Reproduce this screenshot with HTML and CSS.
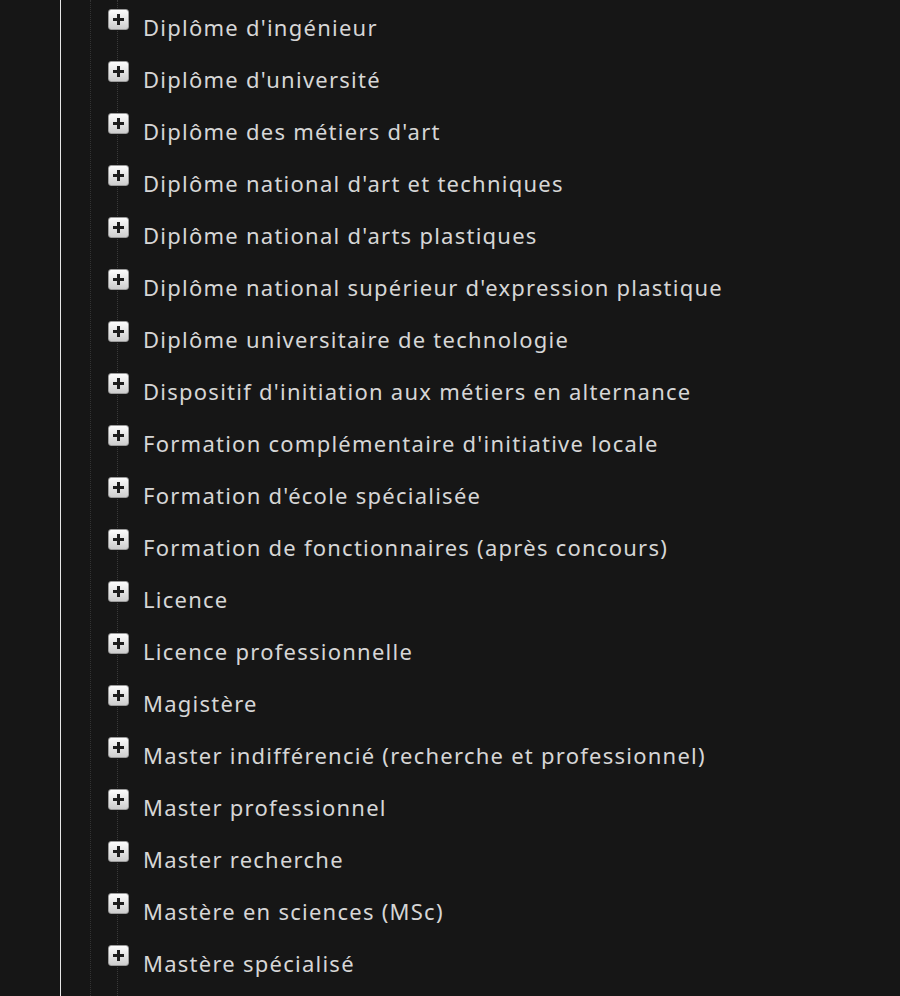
FILE: index.html
```html
<!DOCTYPE html>
<html lang="fr">
<head>
<meta charset="utf-8">
<title>Diplômes</title>
<link rel="stylesheet" href="styles.css">
</head>
<body>
<div class="panel">
  <div class="tree-outer">
    <ul class="tree">
      <li><span class="toggle"></span><span class="label">Diplôme d'ingénieur</span></li>
      <li><span class="toggle"></span><span class="label">Diplôme d'université</span></li>
      <li><span class="toggle"></span><span class="label">Diplôme des métiers d'art</span></li>
      <li><span class="toggle"></span><span class="label">Diplôme national d'art et techniques</span></li>
      <li><span class="toggle"></span><span class="label">Diplôme national d'arts plastiques</span></li>
      <li><span class="toggle"></span><span class="label">Diplôme national supérieur d'expression plastique</span></li>
      <li><span class="toggle"></span><span class="label">Diplôme universitaire de technologie</span></li>
      <li><span class="toggle"></span><span class="label">Dispositif d'initiation aux métiers en alternance</span></li>
      <li><span class="toggle"></span><span class="label">Formation complémentaire d'initiative locale</span></li>
      <li><span class="toggle"></span><span class="label">Formation d'école spécialisée</span></li>
      <li><span class="toggle"></span><span class="label">Formation de fonctionnaires (après concours)</span></li>
      <li><span class="toggle"></span><span class="label">Licence</span></li>
      <li><span class="toggle"></span><span class="label">Licence professionnelle</span></li>
      <li><span class="toggle"></span><span class="label">Magistère</span></li>
      <li><span class="toggle"></span><span class="label">Master indifférencié (recherche et professionnel)</span></li>
      <li><span class="toggle"></span><span class="label">Master professionnel</span></li>
      <li><span class="toggle"></span><span class="label">Master recherche</span></li>
      <li><span class="toggle"></span><span class="label">Mastère en sciences (MSc)</span></li>
      <li><span class="toggle"></span><span class="label">Mastère spécialisé</span></li>
    </ul>
  </div>
</div>
</body>
</html>
```

FILE: styles.css
```css
html, body {
  margin: 0;
  padding: 0;
  background: #161616;
  height: 100%;
  overflow: hidden;
}

.panel {
  margin-left: 60px;
  border-left: 1px solid #e6e6e6;
  height: 996px;
}

.tree-outer {
  margin-left: 29px;
  border-left: 1px dotted #333;
  height: 100%;
}

.tree {
  list-style: none;
  margin: 0 0 0 26px;
  padding: 1px 0 0 0;
  border-left: 1px dotted #3a3a3a;
  box-sizing: border-box;
  height: 100%;
}

.tree li {
  display: flex;
  align-items: center;
  height: 52px;
}

.toggle {
  position: relative;
  box-sizing: border-box;
  width: 21px;
  height: 21px;
  margin-left: -10px;
  margin-top: -16px;
  border-radius: 3px;
  background: linear-gradient(#fdfdfd, #cdcdcd);
  border: 1px solid #9a9a9a;
  flex: none;
}

.toggle::before,
.toggle::after {
  content: "";
  position: absolute;
  background: #1e1e1e;
}

.toggle::before {
  left: 4px;
  top: 8px;
  width: 11px;
  height: 3px;
}

.toggle::after {
  left: 8px;
  top: 4px;
  width: 3px;
  height: 11px;
}

.label {
  margin-left: 14px;
  font-family: "Noto Sans", sans-serif;
  font-size: 22px;
  letter-spacing: 1.25px;
  color: #d6d6d6;
  white-space: nowrap;
}
```
